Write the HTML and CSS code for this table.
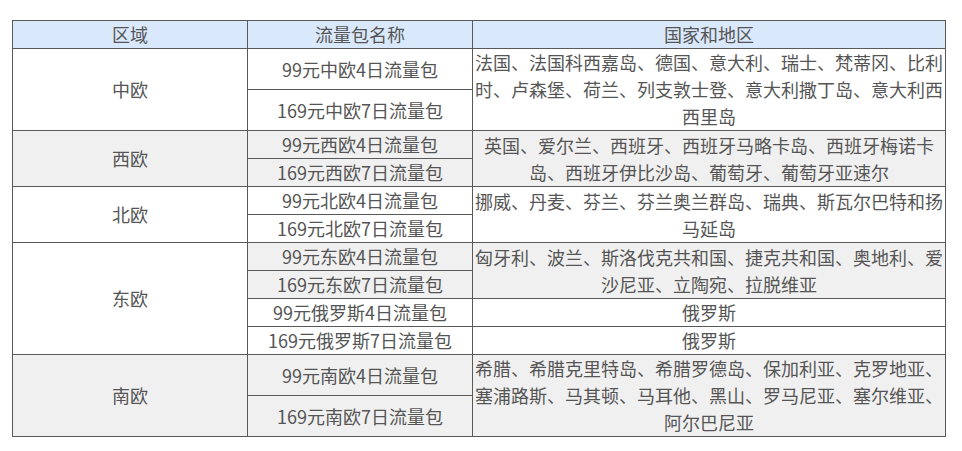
FILE: index.html
```html
<!DOCTYPE html>
<html lang="zh-CN">
<head>
<meta charset="utf-8">
<title>欧洲流量包</title>
<link rel="stylesheet" href="styles.css">
</head>
<body>
<div class="page">
<table class="pkg-table">
  <colgroup>
    <col class="col-region">
    <col class="col-name">
    <col class="col-country">
  </colgroup>
  <thead>
    <tr class="head">
      <th>区域</th>
      <th>流量包名称</th>
      <th>国家和地区</th>
    </tr>
  </thead>
  <tbody>
    <tr>
      <td rowspan="2">中欧</td>
      <td>99元中欧4日流量包</td>
      <td rowspan="2">法国、法国科西嘉岛、德国、意大利、瑞士、梵蒂冈、比利时、卢森堡、荷兰、列支敦士登、意大利撒丁岛、意大利西西里岛</td>
    </tr>
    <tr>
      <td>169元中欧7日流量包</td>
    </tr>
    <tr class="alt">
      <td rowspan="2">西欧</td>
      <td>99元西欧4日流量包</td>
      <td rowspan="2">英国、爱尔兰、西班牙、西班牙马略卡岛、西班牙梅诺卡岛、西班牙伊比沙岛、葡萄牙、葡萄牙亚速尔</td>
    </tr>
    <tr class="alt">
      <td>169元西欧7日流量包</td>
    </tr>
    <tr>
      <td rowspan="2">北欧</td>
      <td>99元北欧4日流量包</td>
      <td rowspan="2">挪威、丹麦、芬兰、芬兰奥兰群岛、瑞典、斯瓦尔巴特和扬马延岛</td>
    </tr>
    <tr>
      <td>169元北欧7日流量包</td>
    </tr>
    <tr>
      <td rowspan="4">东欧</td>
      <td class="alt-cell">99元东欧4日流量包</td>
      <td rowspan="2" class="alt-cell">匈牙利、波兰、斯洛伐克共和国、捷克共和国、奥地利、爱沙尼亚、立陶宛、拉脱维亚</td>
    </tr>
    <tr>
      <td class="alt-cell">169元东欧7日流量包</td>
    </tr>
    <tr>
      <td>99元俄罗斯4日流量包</td>
      <td>俄罗斯</td>
    </tr>
    <tr>
      <td>169元俄罗斯7日流量包</td>
      <td>俄罗斯</td>
    </tr>
    <tr class="alt">
      <td rowspan="2">南欧</td>
      <td>99元南欧4日流量包</td>
      <td rowspan="2">希腊、希腊克里特岛、希腊罗德岛、保加利亚、克罗地亚、塞浦路斯、马其顿、马耳他、黑山、罗马尼亚、塞尔维亚、阿尔巴尼亚</td>
    </tr>
    <tr class="alt">
      <td>169元南欧7日流量包</td>
    </tr>
  </tbody>
</table>
</div>
</body>
</html>
```
FILE: styles.css
```css
html, body {
  margin: 0;
  padding: 0;
  background: #ffffff;
}

.page {
  padding: 20px 0 0 12px;
}

.pkg-table {
  border-collapse: collapse;
  table-layout: fixed;
  width: 933px;
  font-family: "Noto Sans CJK SC", "Noto Sans", sans-serif;
  font-size: 18px;
  line-height: 27px;
  color: #555555;
}

.col-region { width: 235px; }
.col-name { width: 225px; }
.col-country { width: 473px; }

.pkg-table th,
.pkg-table td {
  border: 1px solid #595959;
  padding: 0;
  text-align: center;
  vertical-align: middle;
  font-weight: normal;
}

.head th {
  background: #dae8fc;
}

.alt td,
.alt-cell {
  background: #f0f0f0;
}
```
